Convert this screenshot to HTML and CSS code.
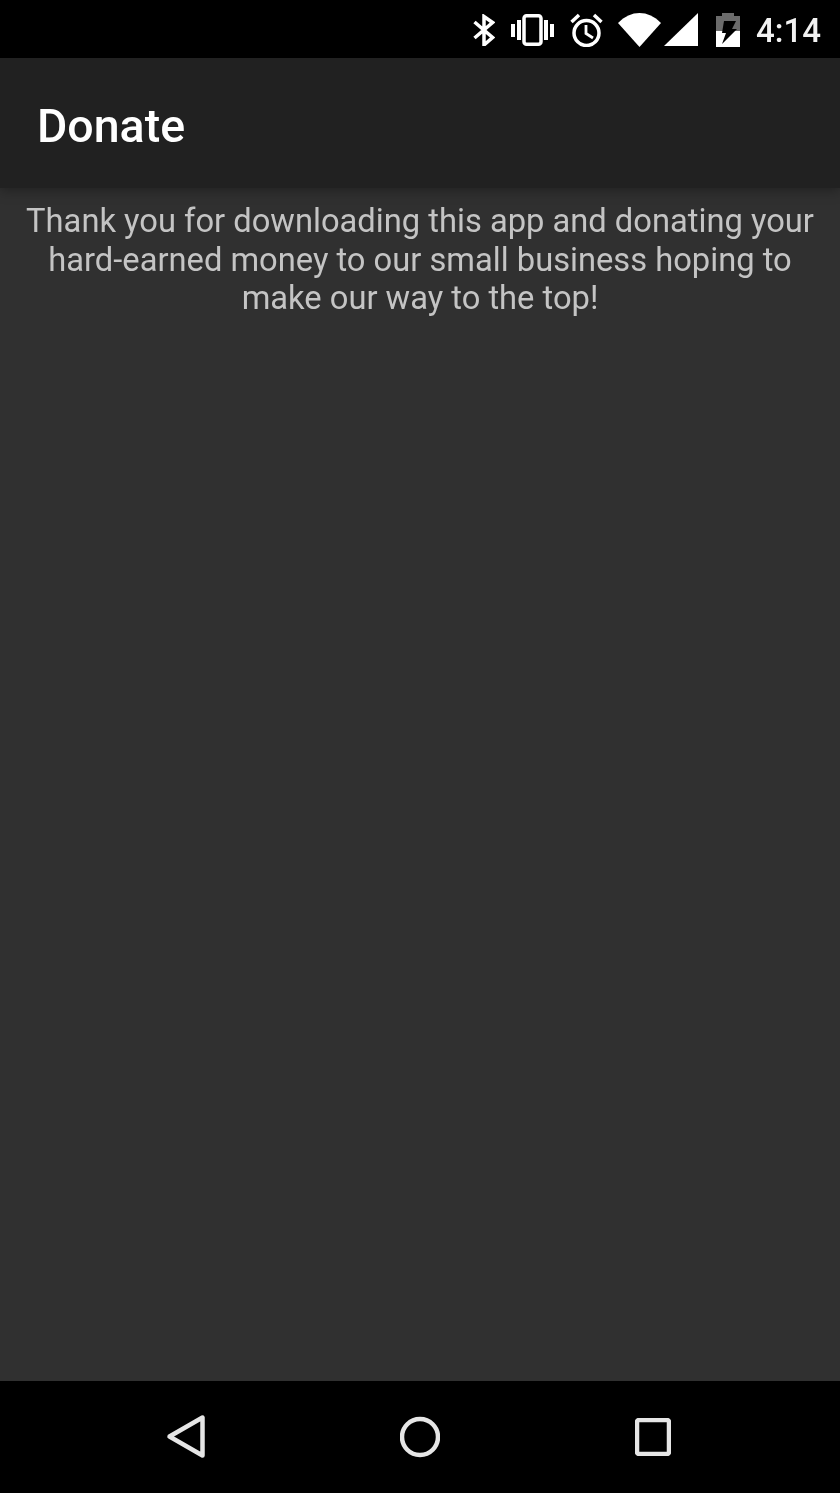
FILE: index.html
```html
<!DOCTYPE html>
<html lang="en">
<head>
<meta charset="utf-8">
<title>Donate</title>
<link rel="stylesheet" href="styles.css">
</head>
<body>
<div class="screen">
  <header class="status">
    <svg class="ic bt" viewBox="0 0 22 32"><path d="M1.500 8 L19.500 23.500 L11 31 V2.500 L19.500 8.500 L1.500 24" fill="none" stroke="#fff" stroke-width="3.500"/></svg>
    <svg class="ic vib" viewBox="0 0 43 32"><rect x="0" y="10" width="4" height="13" fill="#fff"/><rect x="6" y="6" width="4" height="20" fill="#fff"/><rect x="13" y="1.750" width="17" height="28.500" rx="2.500" fill="none" stroke="#fff" stroke-width="3.500"/><rect x="33" y="6" width="4" height="20" fill="#fff"/><rect x="39" y="10" width="4" height="13" fill="#fff"/></svg>
    <svg class="ic alarm" viewBox="0 0 33 34"><circle cx="16.500" cy="20" r="12.500" fill="none" stroke="#fff" stroke-width="3.500"/><path d="M16 12 V20.500 L23 25" fill="none" stroke="#fff" stroke-width="2.800"/><path d="M1.500 9 L9 2 M31.500 9 L24 2" stroke="#fff" stroke-width="3.500" fill="none"/></svg>
    <svg class="ic wifi" viewBox="0 0 43 34"><path d="M0 10 C13 -3.300 30 -3.300 43 10 L21.500 34 Z" fill="#fff"/></svg>
    <svg class="ic sig" viewBox="0 0 34 33"><path d="M0 33 L34 0 V33 Z" fill="#fff"/></svg>
    <svg class="ic bat" viewBox="0 0 24 34"><path d="M6 0 H18 V3 H24 V18 H0 V3 H6 Z" fill="#fff" fill-opacity=".42"/><path d="M0 18 H24 V34 H0 Z" fill="#fff"/><path d="M8 8 H20 L16 16 H21 L6 31 L10 20 H6 Z" fill="#000"/></svg>
    <span class="time">4:14</span>
  </header>
  <div class="appbar"><h1 class="title">Donate</h1></div>
  <main class="content">
    <p class="message">Thank you for downloading this app and donating your hard-earned money to our small business hoping to make our way to the top!</p>
  </main>
  <nav class="navbar">
    <svg class="nav-ic" viewBox="0 0 40 46"><path d="M37.500 3.500 V41.500 L4.500 22.500 Z" fill="none" stroke="#e6e6e6" stroke-width="4.500" stroke-linejoin="round"/></svg>
    <svg class="nav-ic" viewBox="0 0 40 42"><circle cx="20" cy="21" r="18" fill="none" stroke="#e6e6e6" stroke-width="4.500"/></svg>
    <svg class="nav-ic" viewBox="0 0 36 38"><rect x="2" y="2" width="32" height="34" rx="2" fill="none" stroke="#e6e6e6" stroke-width="4.500"/></svg>
  </nav>
</div>
</body>
</html>
```
FILE: styles.css
```css
* { box-sizing: border-box; }
html, body { margin: 0; padding: 0; background: #303030; }
.screen {
  width: 840px;
  height: 1493px;
  display: flex;
  flex-direction: column;
  font-family: Roboto, "Noto Sans", sans-serif;
  overflow: hidden;
}
.status {
  flex: 0 0 58px;
  background: #000;
  display: flex;
  align-items: center;
  justify-content: flex-end;
  padding: 1px 19px 0 0;
}
.ic { display: block; flex: none; }
.bt { width: 22px; height: 32px; margin-right: 16px; }
.vib { width: 43px; height: 32px; margin-right: 16px; }
.alarm { width: 33px; height: 34px; margin-right: 15px; }
.wifi { width: 43px; height: 34px; margin-right: 3px; }
.sig { width: 34px; height: 33px; margin-right: 18px; }
.bat { width: 24px; height: 34px; margin-right: 16px; }
.time { color: #f2f2f2; font-size: 33px; font-weight: 500; line-height: 54px; margin-top: 3px; will-change: transform; }
.appbar {
  flex: 0 0 130px;
  background: #212121;
  display: flex;
  align-items: center;
  padding-left: 37px;
  box-shadow: 0 2px 12px rgba(0, 0, 0, .35);
  position: relative;
}
.title { margin: 7px 0 0; color: #fff; font-size: 46.500px; font-weight: 500; line-height: 1; will-change: transform; }
.content { flex: 1; background: #303030; padding-top: 14px; }
.message {
  margin: 0;
  padding: 0 20px;
  color: #c4c4c4;
  font-size: 32.700px;
  line-height: 38.500px;
  text-align: center;
  will-change: transform;
}
.navbar {
  flex: 0 0 112px;
  background: #000;
  display: flex;
  align-items: center;
  justify-content: space-between;
  padding: 0 169px 0 165px;
}
.nav-ic:nth-child(1) { width: 40px; height: 46px; }
.nav-ic:nth-child(2) { width: 40px; height: 42px; }
.nav-ic:nth-child(3) { width: 36px; height: 38px; }
```
